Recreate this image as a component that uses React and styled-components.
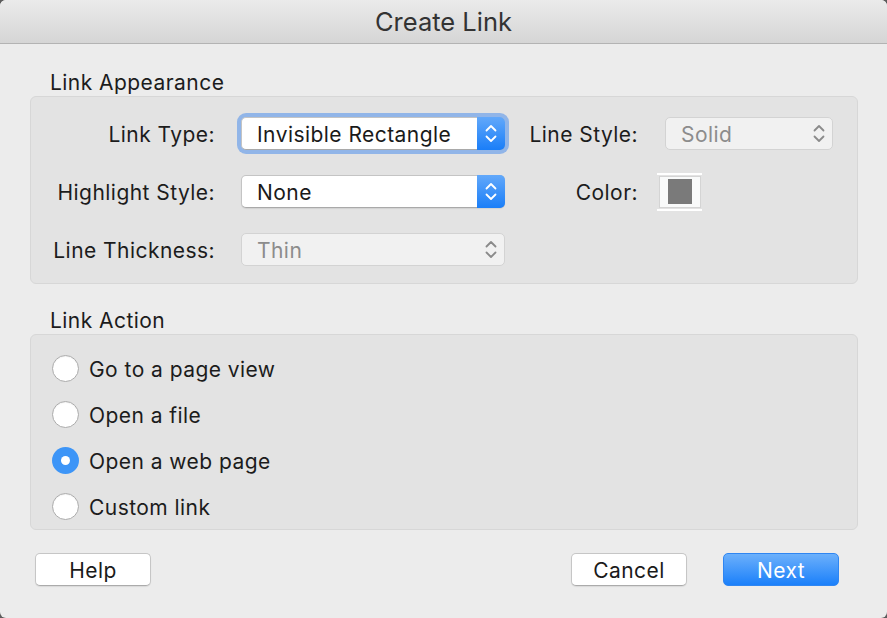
import React from "react";
import styled, { createGlobalStyle, css } from "styled-components";

const GlobalStyle = createGlobalStyle`
  html, body {
    margin: 0;
    padding: 0;
    background: #5c5c5c;
  }
  body {
    font-family: Inter, "Liberation Sans", sans-serif;
    color: #1c1c1c;
  }
`;

const textStyle = css`
  font-size: 21px;
  letter-spacing: 0.45px;
`;

const Window = styled.div`
  width: 887px;
  height: 618px;
  background: #ececec;
  border-radius: 6px;
  overflow: hidden;
  display: flex;
  flex-direction: column;
`;

const TitleBar = styled.div`
  height: 43px;
  flex: none;
  border-bottom: 1px solid #b3b3b3;
  background: linear-gradient(#ebebeb, #d5d5d5);
  display: flex;
  align-items: center;
  justify-content: center;
  font-size: 25.5px;
  color: #333333;
`;

const Content = styled.div`
  padding: 0 29px 0 30px;
  display: flex;
  flex-direction: column;
`;

const SectionLabel = styled.div`
  margin-top: ${({ $top }) => $top}px;
  padding-left: 20px;
  height: 28px;
  line-height: 30px;
  ${textStyle}
`;

const Group = styled.div`
  background: #e3e3e3;
  border: 1px solid #d7d7d7;
  border-radius: 6px;
`;

const AppearanceGrid = styled.div`
  display: grid;
  grid-template-columns: 210px 264px 160px 168px;
  grid-auto-rows: 33px;
  row-gap: 25px;
  align-items: center;
  padding: 20px 0 17px 0;
`;

const FieldLabel = styled.div`
  text-align: right;
  padding-right: ${({ $pad }) => $pad || 26}px;
  padding-top: 2px;
  ${textStyle}
`;

const Popup = styled.div`
  position: relative;
  height: 33px;
  box-sizing: border-box;
  border-radius: 5px;
  display: flex;
  align-items: center;
  ${textStyle}
  padding: 1px 0 0 15px;
  ${({ $disabled }) =>
    $disabled
      ? css`
          background: #f1f1f1;
          border: 1px solid #d3d3d3;
          color: #8c8c8c;
        `
      : css`
          background: #ffffff;
          border: 1px solid #c4c4c4;
          border-bottom-color: #a9a9a9;
          box-shadow: 0 1px 1px rgba(0, 0, 0, 0.08);
          color: #1a1a1a;
        `}
  ${({ $focused }) =>
    $focused &&
    css`
      box-shadow: 0 0 0 4px rgba(90, 150, 235, 0.6);
    `}
`;

const Stepper = styled.div`
  position: absolute;
  top: -1px;
  right: -1px;
  bottom: -1px;
  width: 28px;
  border-radius: 0 5px 5px 0;
  display: flex;
  align-items: center;
  justify-content: center;
  ${({ $blue }) =>
    $blue &&
    css`
      background: linear-gradient(#62a8fa, #1a7ef8);
    `}
`;

const ColorWell = styled.div`
  margin-left: -8px;
  width: 45px;
  height: 38px;
  box-sizing: border-box;
  border-top: 2px solid #ffffff;
  border-bottom: 2px solid #ffffff;
  display: flex;
  align-items: center;
  justify-content: center;
`;

const WellInner = styled.div`
  width: 42px;
  height: 32px;
  box-sizing: border-box;
  background: #f9fafa;
  border: 1px solid #d4d4d4;
  display: flex;
  align-items: center;
  justify-content: center;
`;

const Swatch = styled.div`
  width: 24px;
  height: 25px;
  background: #7a7a7a;
`;

const RadioList = styled.div`
  padding: 10px 0 0 21px;
`;

const RadioRow = styled.div`
  height: 46px;
  display: flex;
  align-items: center;
  gap: 10px;
  ${textStyle}
`;

const RadioText = styled.span`
  padding-top: 3px;
`;

const RadioCircle = styled.div`
  width: 27px;
  height: 27px;
  flex: none;
  box-sizing: border-box;
  border-radius: 50%;
  display: flex;
  align-items: center;
  justify-content: center;
  ${({ $checked }) =>
    $checked
      ? css`
          background: #3d95f7;
        `
      : css`
          background: #ffffff;
          border: 1px solid #ababab;
          box-shadow: inset 0 1px 1px rgba(0, 0, 0, 0.05);
        `}
`;

const Dot = styled.div`
  width: 9px;
  height: 9px;
  border-radius: 50%;
  background: #ffffff;
`;

const Footer = styled.div`
  display: flex;
  align-items: center;
  padding: 23px 48px 0 35px;
  gap: 36px;
`;

const Spacer = styled.div`
  flex: 1;
`;

const Button = styled.div`
  width: 116px;
  height: 33px;
  box-sizing: border-box;
  border-radius: 5px;
  display: flex;
  align-items: center;
  justify-content: center;
  padding-top: 2px;
  ${textStyle}
  ${({ $primary }) =>
    $primary
      ? css`
          background: linear-gradient(#6cb0fb, #1b80fa);
          color: #ffffff;
          border: 1px solid #2f86f2;
        `
      : css`
          background: #ffffff;
          color: #1a1a1a;
          border: 1px solid #c6c6c6;
          border-bottom-color: #ababab;
          box-shadow: 0 1px 1px rgba(0, 0, 0, 0.08);
        `}
`;

function Chevrons({ color }) {
  return (
    <svg width="12" height="19" viewBox="0 0 12 19" fill="none">
      <path
        d="M1.5 6.5 L6 2 L10.5 6.5 M1.5 12.5 L6 17 L10.5 12.5"
        stroke={color}
        strokeWidth="1.8"
        strokeLinecap="round"
        strokeLinejoin="round"
      />
    </svg>
  );
}

function Select({ value, disabled, focused }) {
  return (
    <Popup $disabled={disabled} $focused={focused}>
      {value}
      <Stepper $blue={!disabled}>
        <Chevrons color={disabled ? "#8a8a8a" : "#ffffff"} />
      </Stepper>
    </Popup>
  );
}

const actions = [
  { label: "Go to a page view" },
  { label: "Open a file" },
  { label: "Open a web page", checked: true },
  { label: "Custom link" },
];

export default function App() {
  return (
    <>
      <GlobalStyle />
      <Window>
        <TitleBar>Create Link</TitleBar>
        <Content>
          <SectionLabel $top={24}>Link Appearance</SectionLabel>
          <Group>
            <AppearanceGrid>
              <FieldLabel>Link Type:</FieldLabel>
              <Select value="Invisible Rectangle" focused />
              <FieldLabel $pad={27}>Line Style:</FieldLabel>
              <Select value="Solid" disabled />

              <FieldLabel>Highlight Style:</FieldLabel>
              <Select value="None" />
              <FieldLabel $pad={27}>Color:</FieldLabel>
              <ColorWell>
                <WellInner>
                  <Swatch />
                </WellInner>
              </ColorWell>

              <FieldLabel>Line Thickness:</FieldLabel>
              <Select value="Thin" disabled />
            </AppearanceGrid>
          </Group>

          <SectionLabel $top={22}>Link Action</SectionLabel>
          <Group>
            <RadioList>
              {actions.map((a) => (
                <RadioRow key={a.label}>
                  <RadioCircle $checked={a.checked}>{a.checked && <Dot />}</RadioCircle>
                  <RadioText>{a.label}</RadioText>
                </RadioRow>
              ))}
            </RadioList>
          </Group>
        </Content>
        <Footer>
          <Button>Help</Button>
          <Spacer />
          <Button>Cancel</Button>
          <Button $primary>Next</Button>
        </Footer>
      </Window>
    </>
  );
}
